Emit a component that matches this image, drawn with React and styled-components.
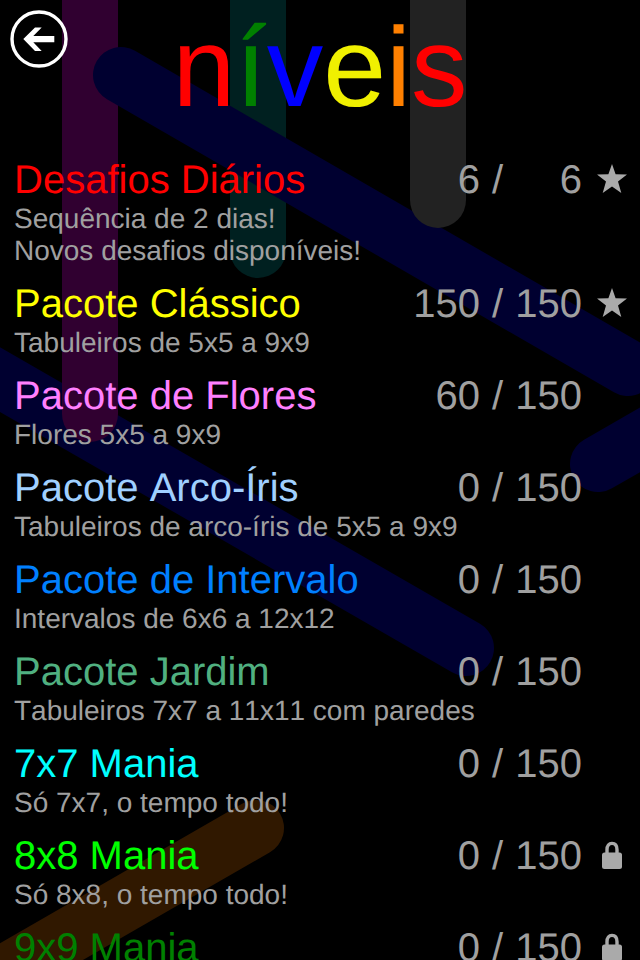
import React from "react";
import styled, { createGlobalStyle } from "styled-components";

const GlobalStyle = createGlobalStyle`
  html, body {
    margin: 0;
    padding: 0;
    background-color: #000000;
  }
  body {
    font-family: "Liberation Sans", Arial, sans-serif;
    text-rendering: geometricPrecision;
  }
`;

const Page = styled.div`
  position: relative;
  width: 640px;
  height: 960px;
  overflow: hidden;
  background-color: #000000;
`;

const Backdrop = styled.svg`
  position: absolute;
  top: 0;
  left: 0;
`;

const Content = styled.div`
  position: relative;
  display: flex;
  flex-direction: column;
`;

const Header = styled.header`
  height: 156px;
  display: grid;
  grid-template-columns: 1fr auto 1fr;
  align-items: start;
`;

const BackButton = styled.button`
  width: 60px;
  height: 60px;
  margin: 9px 0 0 9px;
  padding: 0;
  border: none;
  background: none;
  display: block;
`;

const Title = styled.h1`
  margin: 0;
  font-size: 113px;
  line-height: 134px;
  font-weight: 400;
  white-space: nowrap;
`;

const TitleLetter = styled.span`
  color: ${(props) => props.$color};
`;

const Row = styled.div`
  display: flex;
  flex-direction: column;
  padding: 0 13px 13px 14px;
`;

const RowTop = styled.div`
  height: 46px;
  padding-top: 1px;
  display: flex;
  align-items: flex-start;
  line-height: 46px;
`;

const Name = styled.div`
  flex: 1;
  font-size: 40px;
  font-kerning: none;
  color: ${(props) => props.$color};
  white-space: nowrap;
`;

const Score = styled.div`
  display: grid;
  grid-template-columns: 72px 32px 70px;
  font-size: 40px;
  color: #a0a0a0;
`;

const Done = styled.span`
  text-align: right;
`;

const Slash = styled.span`
  padding-left: 3px;
  text-align: center;
`;

const Total = styled.span`
  text-align: right;
`;

const IconSlot = styled.div`
  width: 30px;
  height: 46px;
  margin: -1px 0 0 15px;
  display: flex;
  align-items: center;
  justify-content: center;
`;

const Sub = styled.div`
  font-size: 28px;
  line-height: 32px;
  font-kerning: ${(props) => (props.$plain ? "none" : "auto")};
  color: #a0a0a0;
  white-space: nowrap;
`;

const titleLetters = [
  ["n", "#ff0000"],
  ["í", "#008000"],
  ["v", "#0000ff"],
  ["e", "#f0f000"],
  ["i", "#ff8000"],
  ["s", "#ff0000"],
];

const levels = [
  { name: "Desafios Diários", color: "#ff0000", done: 6, total: 6, icon: "star", sub: ["Sequência de 2 dias!", "Novos desafios disponíveis!"] },
  { name: "Pacote Clássico", color: "#ffff00", done: 150, total: 150, icon: "star", sub: ["Tabuleiros de 5x5 a 9x9"] },
  { name: "Pacote de Flores", color: "#ff80ff", done: 60, total: 150, sub: ["Flores 5x5 a 9x9"] },
  { name: "Pacote Arco-Íris", color: "#a0d0ff", done: 0, total: 150, sub: ["Tabuleiros de arco-íris de 5x5 a 9x9"] },
  { name: "Pacote de Intervalo", color: "#0080ff", done: 0, total: 150, sub: ["Intervalos de 6x6 a 12x12"] },
  { name: "Pacote Jardim", color: "#50b080", done: 0, total: 150, plainSub: true, sub: ["Tabuleiros 7x7 a 11x11 com paredes"] },
  { name: "7x7 Mania", color: "#00ffff", done: 0, total: 150, sub: ["Só 7x7, o tempo todo!"] },
  { name: "8x8 Mania", color: "#00ff00", done: 0, total: 150, icon: "lock", sub: ["Só 8x8, o tempo todo!"] },
  { name: "9x9 Mania", color: "#008000", done: 0, total: 150, icon: "lock", sub: ["Só 9x9, o tempo todo!"] },
];

// order matters, the later stripes cover the earlier ones
const stripes = [
  { x1: -60, y1: 345, x2: 466, y2: 648, color: "#000030" },
  { x1: 90, y1: -40, x2: 90, y2: 414, color: "#300030" },
  { x1: 258, y1: -40, x2: 258, y2: 250, color: "#002020" },
  { x1: 121, y1: 75, x2: 628, y2: 368, color: "#000030" },
  { x1: 438, y1: -40, x2: 438, y2: 200, color: "#222222" },
  { x1: 598, y1: 464, x2: 720, y2: 394, color: "#000030" },
  { x1: 256, y1: 828, x2: -60, y2: 1010, color: "#301800" },
];

const BackIcon = () => (
  <svg width="60" height="60" viewBox="0 0 60 60">
    <circle cx="30" cy="30" r="27" fill="none" stroke="#ffffff" strokeWidth="3.4" />
    <path d="M14.3 30 L26 18.5 L32.7 18.5 L24.3 27 L45.3 27 L45.3 33.3 L24.3 33.3 L32.7 42 L26 42 Z" fill="#ffffff" />
  </svg>
);

const StarIcon = () => (
  <svg width="30" height="30" viewBox="0 0 30 30">
    <polygon points="15,0 18.6,10.2 30,10.6 21,17.6 24.3,29 15,22.4 5.7,29 9,17.6 0,10.6 11.4,10.2" fill="#aaaaaa" />
  </svg>
);

const LockIcon = () => (
  <svg width="20" height="28" viewBox="0 0 20 28">
    <path d="M5 12 V8.7 C5 4.7 7 2.4 10 2.4 C13 2.4 15 4.7 15 8.7 V12" fill="none" stroke="#aaaaaa" strokeWidth="3.4" />
    <rect x="0" y="11.5" width="20" height="16.5" rx="2.5" fill="#aaaaaa" />
  </svg>
);

const App = () => {
  return (
    <Page>
      <GlobalStyle />
      <Backdrop width="640" height="960" viewBox="0 0 640 960">
        {stripes.map((s, i) => (
          <line key={i} x1={s.x1} y1={s.y1} x2={s.x2} y2={s.y2} stroke={s.color} strokeWidth="56" strokeLinecap="round" />
        ))}
      </Backdrop>
      <Content>
        <Header>
          <BackButton aria-label="Voltar">
            <BackIcon />
          </BackButton>
          <Title>
            {titleLetters.map(([letter, color], i) => (
              <TitleLetter key={i} $color={color}>
                {letter}
              </TitleLetter>
            ))}
          </Title>
        </Header>
        {levels.map((level) => (
          <Row key={level.name}>
            <RowTop>
              <Name $color={level.color}>{level.name}</Name>
              <Score>
                <Done>{level.done}</Done>
                <Slash>/</Slash>
                <Total>{level.total}</Total>
              </Score>
              <IconSlot>
                {level.icon === "star" && <StarIcon />}
                {level.icon === "lock" && <LockIcon />}
              </IconSlot>
            </RowTop>
            {level.sub.map((line) => (
              <Sub key={line} $plain={level.plainSub}>
                {line}
              </Sub>
            ))}
          </Row>
        ))}
      </Content>
    </Page>
  );
};

export default App;
